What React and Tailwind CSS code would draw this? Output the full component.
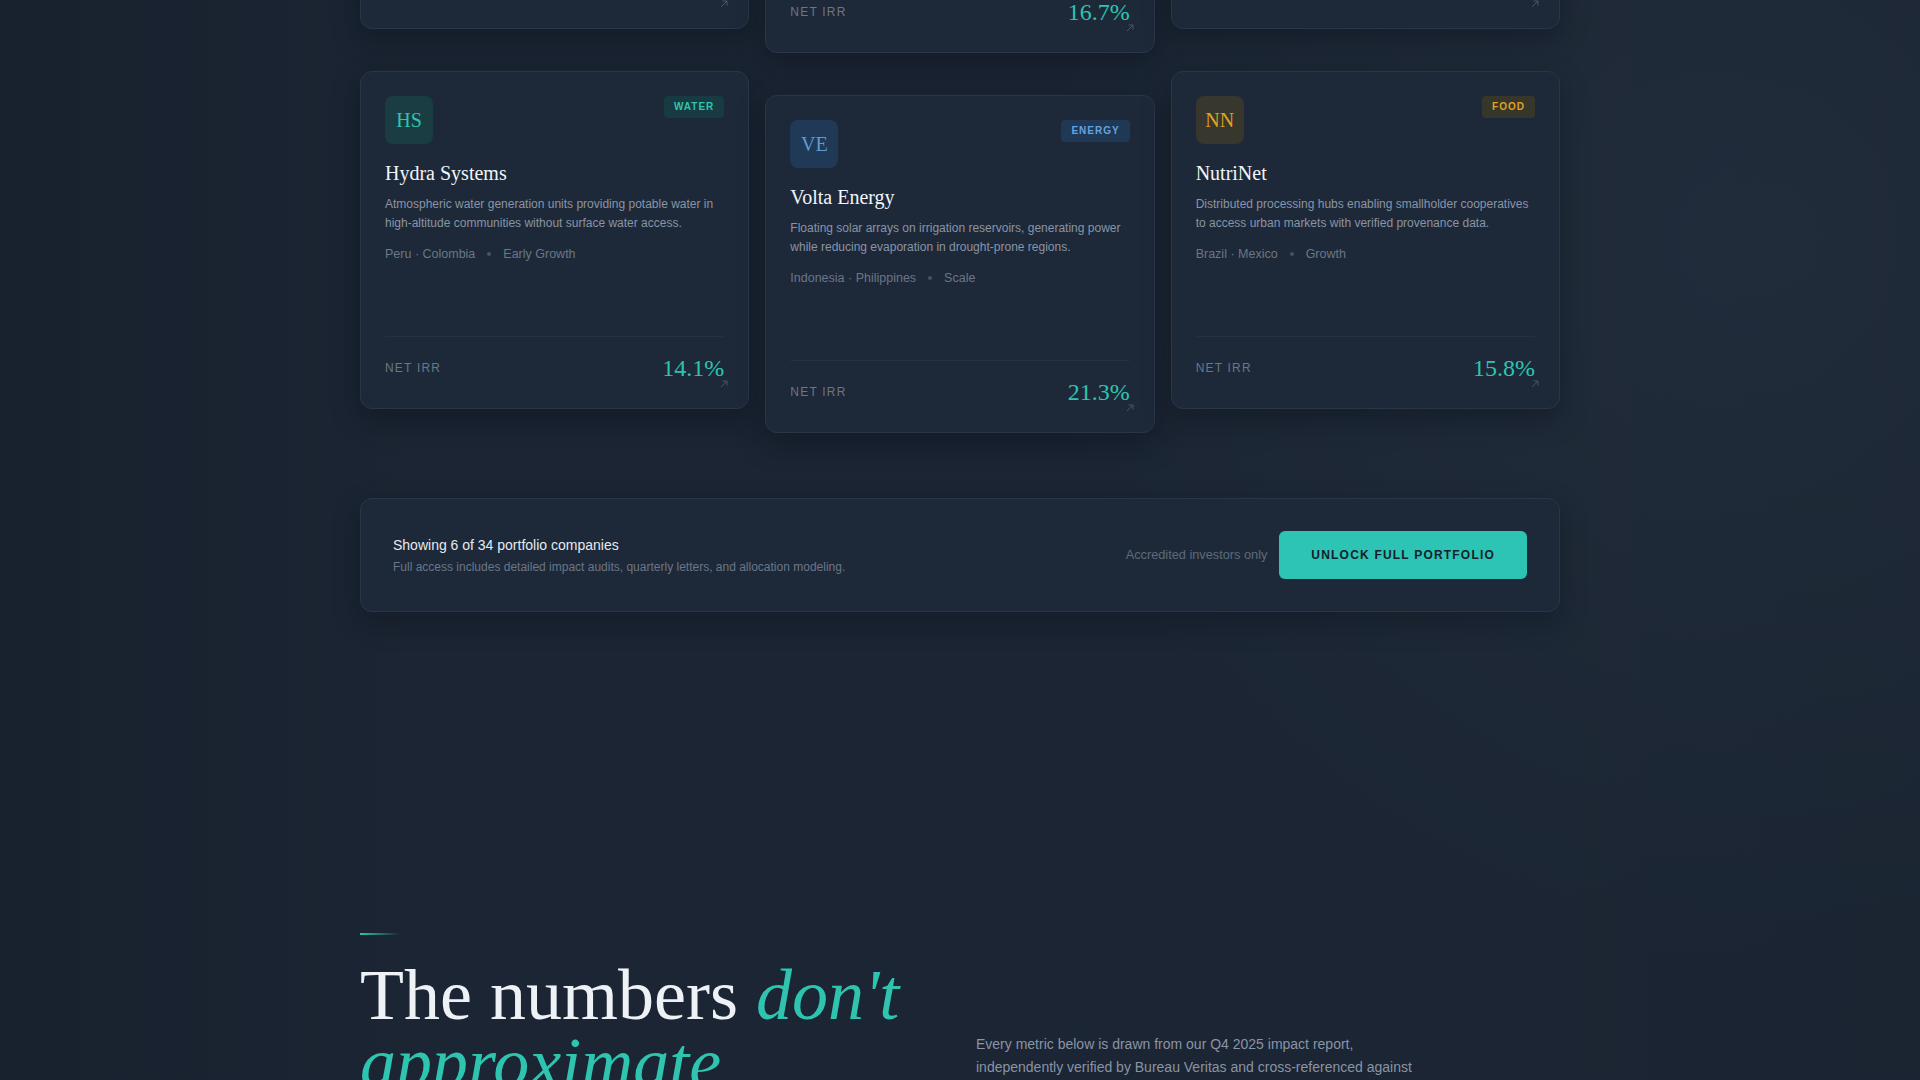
import React from "react";

const row1 = [
  {
    initials: "TC",
    name: "Terra Carbon",
    tag: "CLIMATE",
    desc: "Soil carbon sequestration programs paying farmers for regenerative practices across degraded grasslands.",
    where: "Kenya · Tanzania",
    stage: "Growth",
    irr: "18.2%",
    theme: "teal",
  },
  {
    initials: "MC",
    name: "MediChain",
    tag: "HEALTH",
    desc: "Cold-chain logistics network delivering vaccines and essential medicines to rural clinics.",
    where: "India · Bangladesh",
    stage: "Scale",
    irr: "16.7%",
    theme: "blue",
  },
  {
    initials: "LB",
    name: "LoopBuild",
    tag: "HOUSING",
    desc: "Low-carbon modular housing built from recycled aggregate for fast-growing informal settlements.",
    where: "Nigeria · Ghana",
    stage: "Early Growth",
    irr: "12.9%",
    theme: "amber",
  },
];

const row2 = [
  {
    initials: "HS",
    name: "Hydra Systems",
    tag: "WATER",
    desc: "Atmospheric water generation units providing potable water in high-altitude communities without surface water access.",
    where: "Peru · Colombia",
    stage: "Early Growth",
    irr: "14.1%",
    theme: "teal",
  },
  {
    initials: "VE",
    name: "Volta Energy",
    tag: "ENERGY",
    desc: "Floating solar arrays on irrigation reservoirs, generating power while reducing evaporation in drought-prone regions.",
    where: "Indonesia · Philippines",
    stage: "Scale",
    irr: "21.3%",
    theme: "blue",
  },
  {
    initials: "NN",
    name: "NutriNet",
    tag: "FOOD",
    desc: "Distributed processing hubs enabling smallholder cooperatives to access urban markets with verified provenance data.",
    where: "Brazil · Mexico",
    stage: "Growth",
    irr: "15.8%",
    theme: "amber",
  },
];

const themes = {
  teal: {
    logo: "bg-[#1a3d43] text-[#2ec4b0]",
    badge: "bg-[#173b41] text-[#2ec4b0]",
  },
  blue: {
    logo: "bg-[#1f3957] text-[#5e9bd6]",
    badge: "bg-[#1e3856] text-[#67a3dd]",
  },
  amber: {
    logo: "bg-[#37372d] text-[#dfa323]",
    badge: "bg-[#36362b] text-[#dfa323]",
  },
};

function Arrow() {
  return (
    <svg
      className="absolute bottom-5 right-5 h-2 w-2"
      viewBox="0 0 8 8"
      fill="none"
      stroke="#4a5567"
      strokeWidth="1"
    >
      <path d="M1 7L7 1M2.5 1H7V5.5" />
    </svg>
  );
}

function Card({ c, middle }) {
  const t = themes[c.theme];
  return (
    <div
      className={`relative flex h-[338px] flex-col rounded-xl border border-[#2a3647] bg-[#1d2939] p-6 shadow-[0_10px_28px_rgba(5,10,18,0.35)] ${
        middle ? "translate-y-6" : ""
      }`}
    >
      <div className="flex items-start justify-between">
        <div
          className={`flex h-12 w-12 items-center justify-center rounded-lg font-['Liberation_Serif',serif] text-xl ${t.logo}`}
        >
          {c.initials}
        </div>
        <span
          className={`rounded px-2.5 py-1 text-[10px] font-bold leading-[14px] tracking-[0.1em] ${t.badge}`}
        >
          {c.tag}
        </span>
      </div>
      <h3 className="mt-[15px] font-['Liberation_Serif',serif] text-xl leading-7 text-[#f1f5f9]">
        {c.name}
      </h3>
      <p className="mt-2 text-xs leading-[19px] text-[#8a94a5]">{c.desc}</p>
      <div className="mt-[13px] flex items-center gap-3 text-[12.5px] leading-4 text-[#6b7687]">
        <span>{c.where}</span>
        <span className="h-1 w-1 rounded-full bg-[#465264]" />
        <span>{c.stage}</span>
      </div>
      <div className="mt-auto flex items-center justify-between border-t border-[#253143] pt-[15px]">
        <span className="text-xs leading-4 tracking-[0.1em] text-[#6b7687]">NET IRR</span>
        <span className="font-['Liberation_Serif',serif] text-2xl leading-8 text-[#2ec4b0]">
          {c.irr}
        </span>
      </div>
      <Arrow />
    </div>
  );
}

export default function App() {
  return (
    <div className="relative h-screen w-full overflow-hidden bg-[#1b2533] font-['Liberation_Sans',Arial,sans-serif]">
      <div className="pointer-events-none absolute inset-0 bg-[radial-gradient(circle_at_92%_22%,rgba(120,150,180,0.07),transparent_38%)]" />
      <div className="pointer-events-none absolute inset-0 bg-[linear-gradient(90deg,rgba(10,16,24,0.18),transparent_22%,transparent_78%,rgba(10,16,24,0.05))]" />
      <div className="relative mx-auto w-[1200px]">
        <div className="mt-[-309px] grid grid-cols-3 gap-x-4 gap-y-[42px]">
          {row1.map((c, i) => (
            <Card key={c.name} c={c} middle={i === 1} />
          ))}
          {row2.map((c, i) => (
            <Card key={c.name} c={c} middle={i === 1} />
          ))}
        </div>

        <div className="mt-[89px] flex items-center justify-between rounded-xl border border-[#2a3647] bg-[#1d2939] p-8 shadow-[0_10px_28px_rgba(5,10,18,0.3)]">
          <div>
            <p className="text-sm leading-5 text-[#e6eaf0]">Showing 6 of 34 portfolio companies</p>
            <p className="mt-1 text-xs leading-4 text-[#6b7687]">
              Full access includes detailed impact audits, quarterly letters, and allocation modeling.
            </p>
          </div>
          <div className="flex items-center gap-3">
            <span className="text-[12.75px] leading-4 text-[#5f6a7b]">Accredited investors only</span>
            <button className="rounded-md bg-[#2dc4b5] px-8 py-4 text-xs font-bold leading-4 tracking-[0.1em] text-[#14212c]">
              UNLOCK FULL PORTFOLIO
            </button>
          </div>
        </div>

        <div className="mt-[321px] grid grid-cols-2 items-start gap-8">
          <div>
            <div className="mb-[27px] h-0.5 w-10 bg-gradient-to-r from-[#2ec4b0] to-transparent" />
            <h2 className="font-['Liberation_Serif',serif] text-[72px] leading-[0.94] text-[#eef2f7]">
              The numbers <em className="text-[#2ec4b0]">don't approximate</em>
            </h2>
          </div>
          <p className="max-w-md pt-[100px] text-sm leading-relaxed text-[#8a94a5]">
            Every metric below is drawn from our Q4 2025 impact report, independently verified by Bureau
            Veritas and cross-referenced against the IRIS+ framework maintained by the Global Impact
            Investing Network.
          </p>
        </div>
      </div>
    </div>
  );
}
